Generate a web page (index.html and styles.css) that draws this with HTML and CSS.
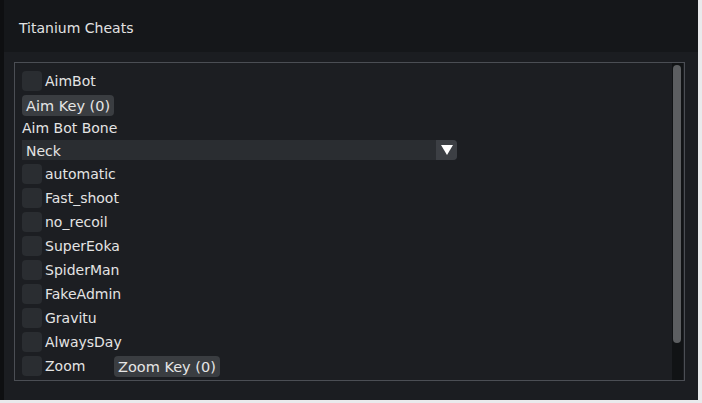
FILE: index.html
```html
<!DOCTYPE html>
<html lang="en">
<head>
    <meta charset="UTF-8">
    <title>Titanium Cheats</title>
    <link rel="stylesheet" href="styles.css">
</head>
<body>

<div class="window">
    <div class="title-bar">Titanium Cheats</div>
    <div class="window-body">
        <div class="frame">
            <div class="frame-content">
                <label class="check-row"><span class="box"></span>AimBot</label>
                <div class="row"><button class="key-btn">Aim Key (0)</button></div>
                <div class="caption">Aim Bot Bone</div>
                <div class="combo">
                    <span class="combo-value">Neck</span>
                    <span class="combo-arrow">
                        <svg width="14" height="12" viewBox="0 0 14 12"><path d="M1 1 L13 1 L7 11 Z" fill="#ffffff"/></svg>
                    </span>
                </div>
                <label class="check-row"><span class="box"></span>automatic</label>
                <label class="check-row"><span class="box"></span>Fast_shoot</label>
                <label class="check-row"><span class="box"></span>no_recoil</label>
                <label class="check-row"><span class="box"></span>SuperEoka</label>
                <label class="check-row"><span class="box"></span>SpiderMan</label>
                <label class="check-row"><span class="box"></span>FakeAdmin</label>
                <label class="check-row"><span class="box"></span>Gravitu</label>
                <label class="check-row"><span class="box"></span>AlwaysDay</label>
                <div class="check-row">
                    <span class="box"></span><span class="zoom-label">Zoom</span>
                    <button class="key-btn">Zoom Key (0)</button>
                </div>
            </div>
            <div class="scrollbar"><div class="thumb"></div></div>
        </div>
    </div>
</div>

</body>
</html>
```

FILE: styles.css
```css
body {
    margin: 0;
    background-color: #e9eaec;
    font-family: 'DejaVu Sans', Verdana, sans-serif;
    font-size: 14px;
    color: #e4e4e4;
}
.window {
    width: 698px;
    height: 400px;
    background-color: #1b1d21;
    border-left: 4px solid #0e0f11;
    box-sizing: border-box;
    display: flex;
    flex-direction: column;
}
.title-bar {
    height: 52px;
    background-color: #15171a;
    padding-left: 15px;
    line-height: 57px;
    color: #e2e2e2;
    flex-shrink: 0;
}
.window-body {
    padding: 10px 13px 0 10px;
}
.frame {
    height: 319px;
    border: 1px solid #4b4e54;
    box-sizing: border-box;
    display: flex;
    background-color: #1c1e22;
}
.frame-content {
    flex: 1;
    padding: 8px 0 0 7px;
    display: flex;
    flex-direction: column;
    gap: 4px;
}
.check-row {
    display: flex;
    align-items: center;
    height: 20px;
    line-height: 22px;
}
.box {
    width: 20px;
    height: 20px;
    border-radius: 4px;
    background-color: #2a2d31;
    margin-right: 3px;
}
.row {
    height: 20px;
    display: flex;
}
.key-btn {
    font-family: inherit;
    font-size: 14.5px;
    color: #e6e6e6;
    background-color: #3a3d41;
    border: none;
    border-radius: 4px;
    height: 21px;
    padding: 1px 4px 0 4px;
    margin: 0;
}
.caption {
    height: 17px;
    line-height: 19px;
}
.zoom-label {
    width: 69px;
}
.combo {
    width: 435px;
    height: 20px;
    display: flex;
    background-color: #2a2d31;
    border-radius: 0 4px 4px 0;
}
.combo-value {
    flex: 1;
    padding-left: 4px;
    line-height: 22px;
}
.combo-arrow {
    width: 21px;
    background-color: #3c3f44;
    border-radius: 0 4px 4px 0;
    display: flex;
    align-items: center;
    justify-content: center;
}
.scrollbar {
    width: 11px;
    margin-right: 1px;
    background-color: #111315;
    padding: 2px 2px 0 1px;
    box-sizing: border-box;
}
.thumb {
    height: 278px;
    background-color: #5c5e61;
    border-radius: 4px;
}
```
